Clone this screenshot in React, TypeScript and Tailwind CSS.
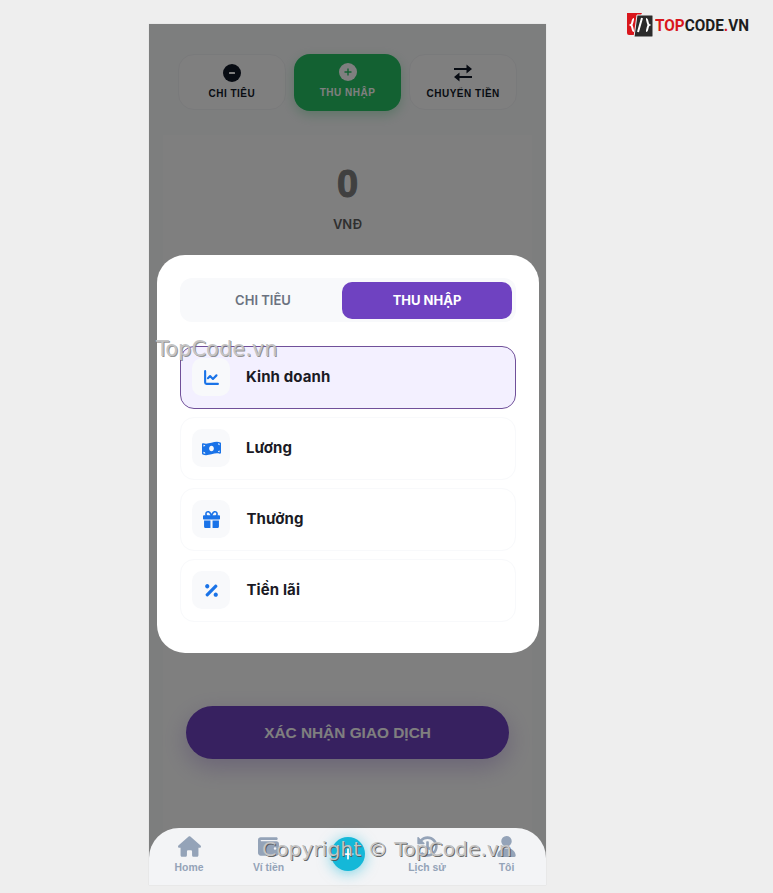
import { FaHistory, FaMoneyBillWave, FaPercentage } from "react-icons/fa";
import { FaHouse, FaUser, FaWallet, FaGift, FaPlus } from "react-icons/fa6";
import { ChartLine } from "lucide-react";

const NAV_LEFT = [
  { label: "Home", icon: FaHouse },
  { label: "Ví tiền", icon: FaWallet },
];

const NAV_RIGHT = [
  { label: "Lịch sử", icon: FaHistory },
  { label: "Tôi", icon: FaUser },
];

const CATEGORIES = [
  { label: "Kinh doanh", icon: ChartLine, iconClass: "h-[17px] w-[17px] stroke-[3]", gap: "ml-[16px]", active: true },
  { label: "Lương", icon: FaMoneyBillWave, iconClass: "h-[19px] w-[19px]", gap: "ml-[16px]" },
  { label: "Thưởng", icon: FaGift, iconClass: "h-[17px] w-[17px]", gap: "ml-[16.5px]" },
  { label: "Tiền lãi", icon: FaPercentage, iconClass: "h-[17px] w-[17px]", gap: "ml-[16.5px]" },
];

function NavItem({ label, icon: Icon }: { label: string; icon: typeof FaHouse }) {
  return (
    <div className="flex flex-col items-center">
      <Icon className="h-[21px] w-[23px] text-[#94a3b8]" />
      <span className="mt-[4px] font-['Liberation_Sans',sans-serif] text-[10.4px] leading-[14px] font-bold text-[#94a3b8]">{label}</span>
    </div>
  );
}

function TopCodeLogo() {
  return (
    <div className="absolute top-[12px] left-[626px] flex items-center">
      <svg width="28" height="26" viewBox="0 0 28 26">
        <path d="M1 1h15l-1 2-3 20H3a2 2 0 0 1-2-2z" fill="#d9161c" />
        <path d="M11 3h15a1 1 0 0 1 1 1v20a1 1 0 0 1-1 1H8z" fill="#2b2b2b" stroke="#eeeeee" strokeWidth="1" />
        <path d="M8 7c-2 0-1 5-3 6 2 1 1 6 3 6M20 7c2 0 1 5 3 6-2 1-1 6-3 6M16 6l-4 14" fill="none" stroke="#fff" strokeWidth="2" />
      </svg>
      <span className="ml-[1px] origin-left scale-x-[0.9] font-['Roboto',sans-serif] text-[17px] leading-none font-bold text-[#1d1d1d]">
        <span className="text-[#d9161c]">TOP</span>CODE<span className="text-[#d9161c]">.</span>VN
      </span>
    </div>
  );
}

export default function App() {
  return (
    <div className="relative h-[893px] w-[773px] overflow-hidden bg-[#eeeeee] font-['Inter',sans-serif]">
      <TopCodeLogo />

      <div className="relative mt-[24px] ml-[149px] flex h-[861px] w-[397px] flex-col bg-[#fbfcfd] shadow-[0_0_1px_rgba(0,0,0,0.15)]">
        {/* Type tabs */}
        <div className="flex gap-[8px] px-[29px] pt-[30px]">
          <div className="flex h-[56px] w-[108px] flex-col items-center rounded-[16px] border border-[#f3f4f6] bg-white pt-[9px] text-[#111827]">
            <svg width="18" height="18" viewBox="0 0 18 18">
              <circle cx="9" cy="9" r="9" fill="#111827" />
              <rect x="6" y="8" width="6" height="2" rx="0.5" fill="#ffffff" />
            </svg>
            <span className="mt-[5px] font-['Liberation_Sans',sans-serif] text-[10px] leading-[14px] font-bold tracking-[0.5px]">CHI TIÊU</span>
          </div>
          <div className="flex h-[57px] w-[108px] flex-col items-center rounded-[16px] bg-[#27c265] pt-[9px] text-white shadow-[0_4px_12px_rgba(39,194,101,0.3)]">
            <svg width="18" height="18" viewBox="0 0 18 18">
              <circle cx="9" cy="9" r="9" fill="#ffffff" />
              <path d="M9 5.5v7M5.5 9h7" stroke="#27c265" strokeWidth="1.4" />
            </svg>
            <span className="mt-[5px] font-['Liberation_Sans',sans-serif] text-[10px] leading-[14px] font-bold tracking-[0.5px]">THU NHẬP</span>
          </div>
          <div className="flex h-[56px] w-[108px] flex-col items-center rounded-[16px] border border-[#f3f4f6] bg-white pt-[9px] text-[#111827]">
            <svg width="18" height="18" viewBox="0 0 18 18" fill="#111827">
              <path d="M0 4h12.5V0.5L18 5l-5.500 4.500V6H0z" />
              <path d="M18 14H5.500v3.500L0 13l5.500-4.500V12H18z" />
            </svg>
            <span className="mt-[5px] font-['Liberation_Sans',sans-serif] text-[10px] leading-[14px] font-bold tracking-[0.5px]">CHUYỂN TIỀN</span>
          </div>
        </div>

        {/* Amount + confirm */}
        <div className="mx-[14px] mt-[24px] flex flex-1 flex-col bg-white">
          <div className="mt-[26px] flex flex-col items-center">
            <span className="font-['Liberation_Sans',sans-serif] text-[38px] leading-[46px] font-bold text-[#808080] [-webkit-text-stroke:1px_#808080]">0</span>
            <span className="mt-[8px] text-[13px] leading-[18px] font-semibold text-[#606060]">VNĐ</span>
          </div>
          <div className="mt-[473px] px-[23px]">
            <div className="flex h-[53px] items-center justify-center rounded-full bg-[#6f42c1] font-['Liberation_Sans',sans-serif] text-[15.4px] font-bold text-white shadow-[0_8px_24px_rgba(111,66,193,0.3)]">
              XÁC NHẬN GIAO DỊCH
            </div>
          </div>
        </div>

        {/* Dim layer */}
        <div className="absolute inset-0 bg-black/50" />

        {/* Category sheet */}
        <div className="absolute top-[231px] left-[8px] h-[398px] w-[382px] rounded-[28px] bg-white px-[23px] pt-[23px]">
          <div className="flex h-[44px] w-[336px] gap-[4px] rounded-[12px] bg-[#f8f9fb] p-[4px]">
            <div className="flex h-[37px] flex-1 items-center justify-center pl-[4px] text-[13px] font-semibold text-[#6b7280]">CHI TIÊU</div>
            <div className="flex h-[37px] w-[170px] items-center justify-center rounded-[10px] bg-[#6f42c1] text-[13px] font-bold text-white">THU NHẬP</div>
          </div>
          <div className="mt-[24px] flex flex-col gap-[8px]">
            {CATEGORIES.map(({ label, icon: Icon, iconClass, gap, active }) => (
              <div
                key={label}
                className={`flex h-[63px] w-[336px] items-center rounded-[14px] border px-[11px] ${
                  active ? "border-[#70509a] bg-[#f3f0ff]" : "border-[#f8f9fb] bg-white"
                }`}
              >
                <div className="mb-[1px] flex h-[38px] w-[38px] items-center justify-center rounded-[10px] bg-[#f8f9fb]">
                  <Icon className={`${iconClass} text-[#1a73e8]`} />
                </div>
                <span className={`${gap} text-[15px] font-bold tracking-[0.1px] text-[#1a1a24]`}>{label}</span>
              </div>
            ))}
          </div>
        </div>

        {/* Bottom nav */}
        <div className="absolute right-0 bottom-0 left-0 grid h-[57px] grid-cols-[80px_79px_79px_80px_79px] items-start rounded-t-[30px] bg-[#f3f4f6] pt-[8px]">
          {NAV_LEFT.map((n) => <NavItem key={n.label} {...n} />)}
          <div className="flex justify-center pt-[1px]">
            <div className="flex h-[34px] w-[34px] items-center justify-center rounded-full bg-[#14b8d8] shadow-[0_2px_14px_rgba(20,184,216,0.55)]">
              <FaPlus className="h-[14px] w-[14px] text-white" />
            </div>
          </div>
          {NAV_RIGHT.map((n) => <NavItem key={n.label} {...n} />)}
        </div>
      </div>

      {/* Watermarks */}
      <span className="absolute top-[336px] left-[156px] font-['DejaVu_Sans',sans-serif] text-[21px] leading-[26px] text-[#c4c4c4] [text-shadow:1px_1px_0_rgba(120,120,120,0.8)]">TopCode.vn</span>
      <span className="absolute top-[835px] left-[262px] font-['DejaVu_Sans',sans-serif] text-[20.3px] leading-[28px] text-[#c4c4c4] [text-shadow:1px_1px_0_rgba(80,80,80,0.85)]">Copyright © TopCode.vn</span>
    </div>
  );
}
